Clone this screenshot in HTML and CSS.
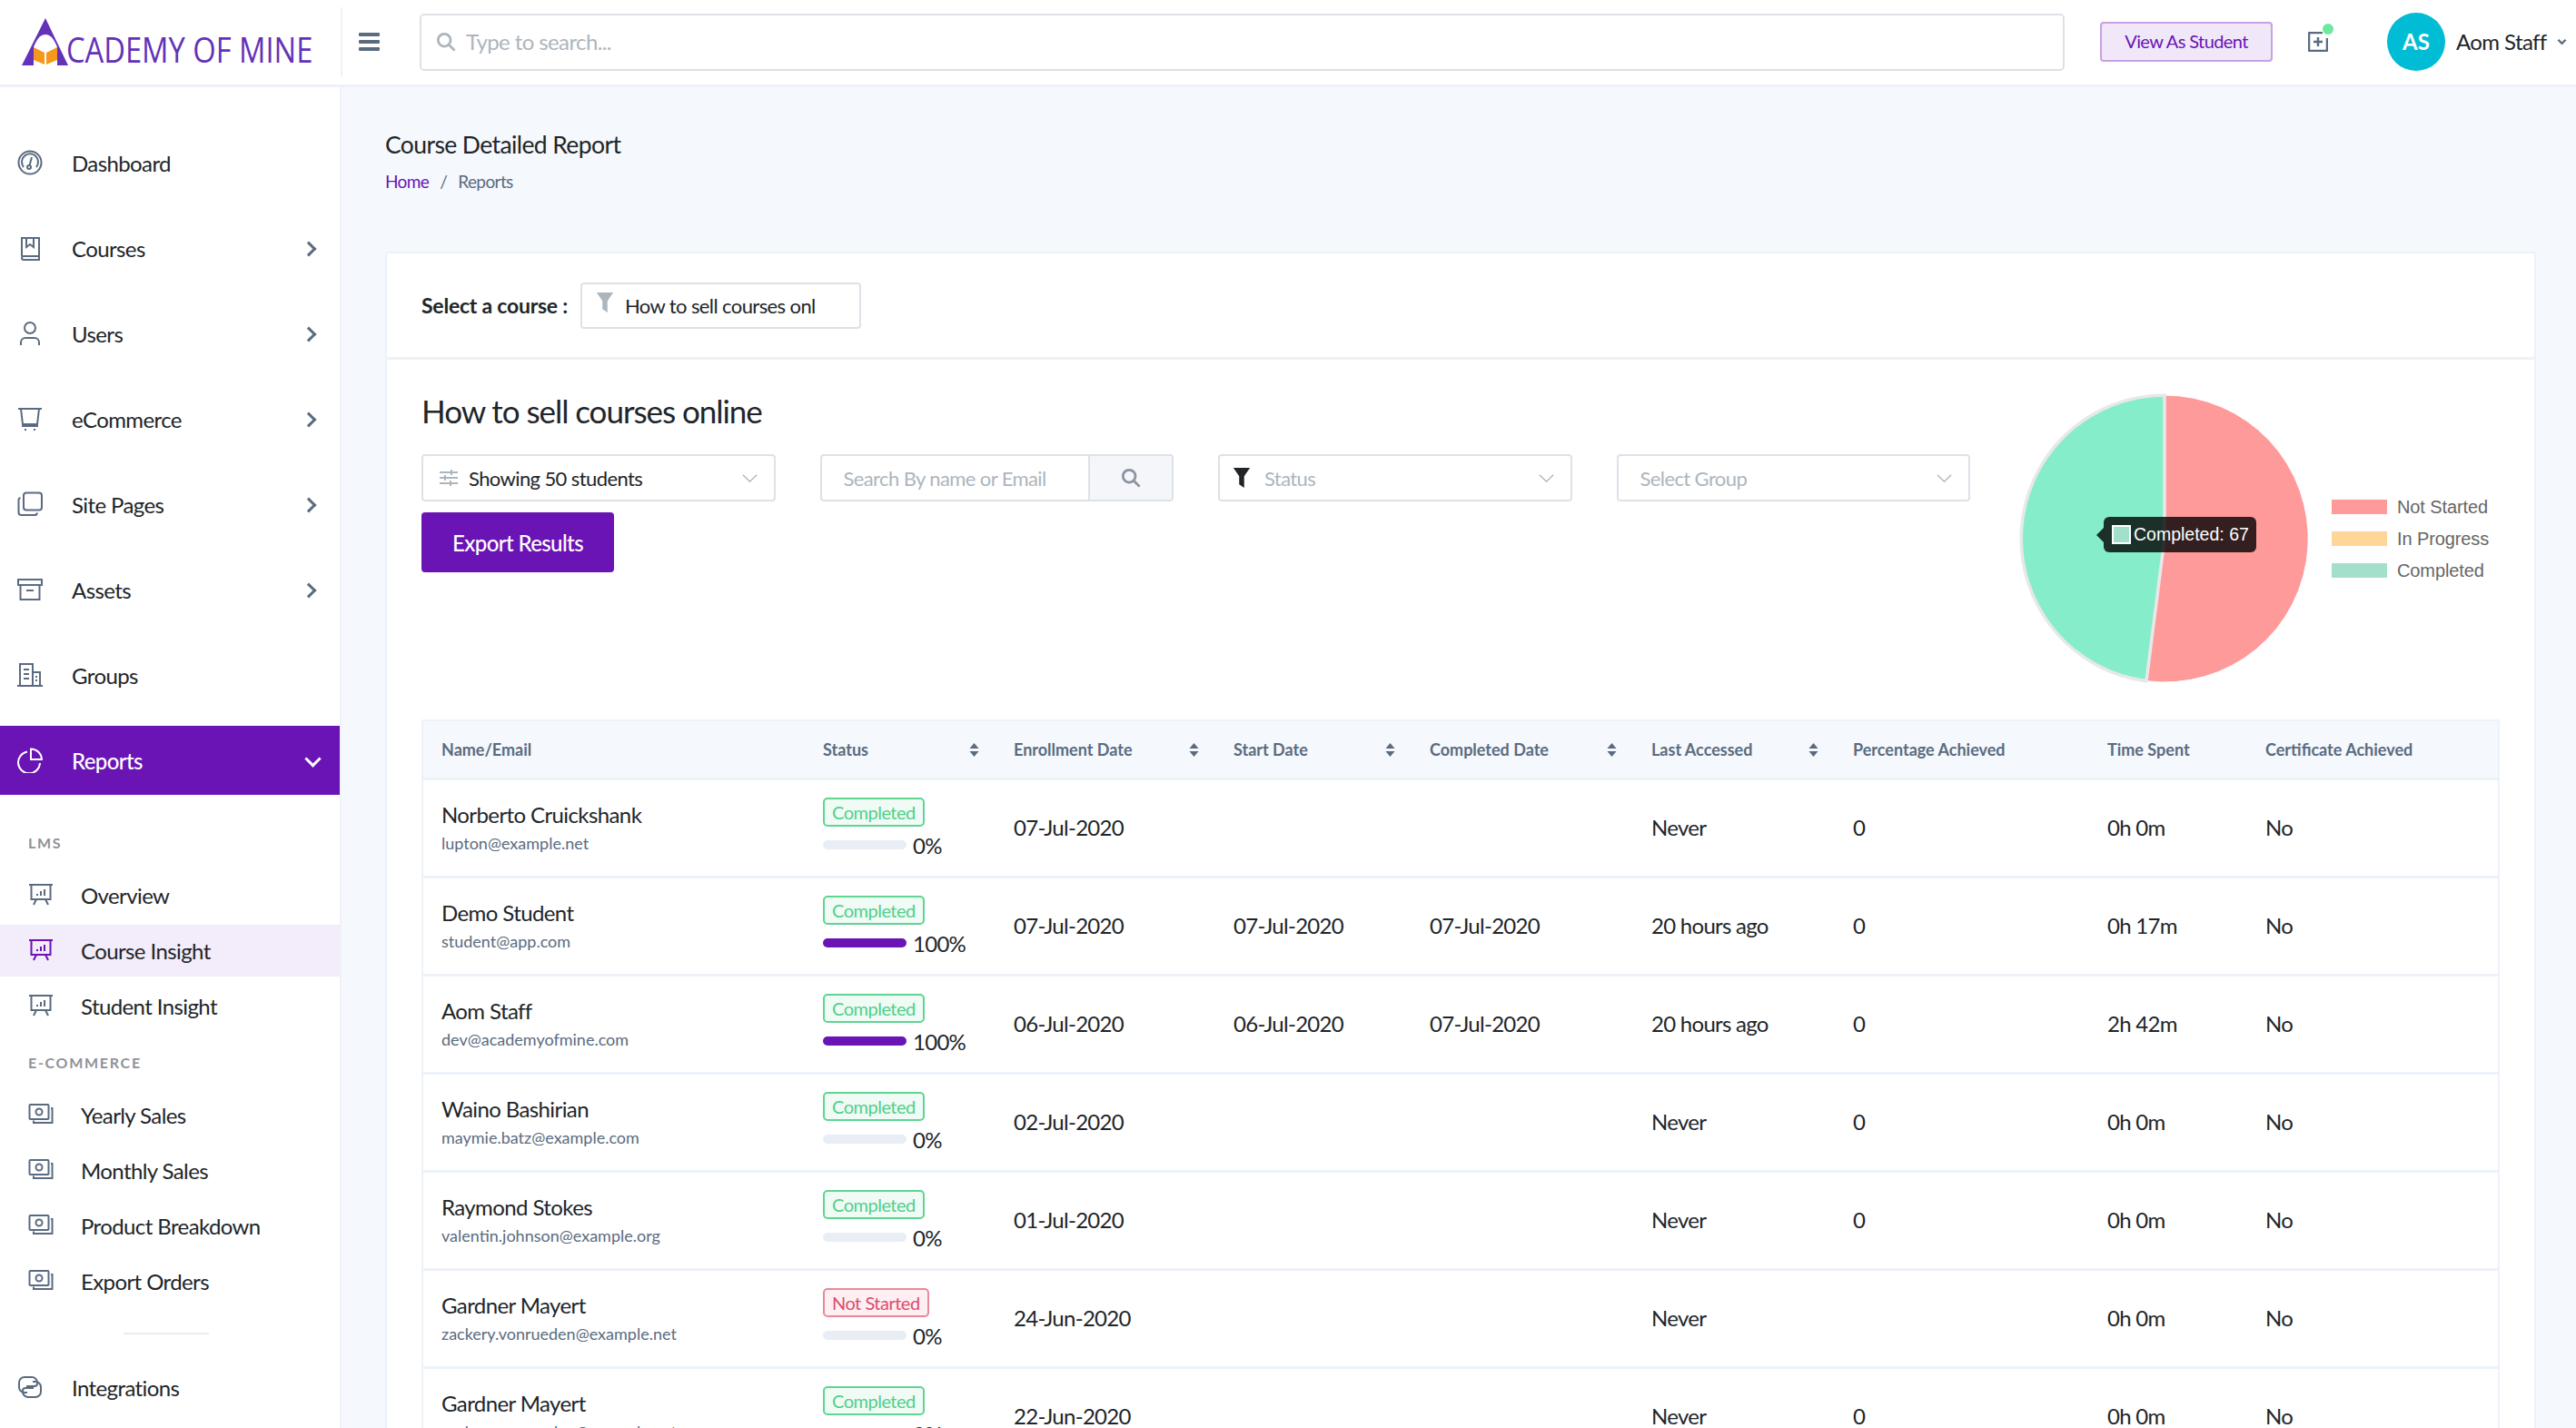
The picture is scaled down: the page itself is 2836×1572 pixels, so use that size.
FILE: index.html
```html
<!DOCTYPE html>
<html lang="en">
<head>
  <meta charset="UTF-8">
  <title>Course Detailed Report</title>
  <link rel="stylesheet" href="styles.css">
</head>
<body>
  <svg class="sprite" width="0" height="0">
    <symbol id="i-gauge" viewBox="0 0 28 28"><ellipse cx="14" cy="14" rx="12.5" ry="12.5"/><path d="M7 19a9 9 0 1 1 14 0"/><circle cx="13" cy="19" r="2"/><path d="M13.5 17 16 8"/></symbol>
    <symbol id="i-book" viewBox="0 0 28 28"><path d="M5 23V3h19v24H7a2 2 0 0 1-2-2 2 2 0 0 1 2-2h17"/><path d="M10 3v10l4-3 4 3V3"/></symbol>
    <symbol id="i-user" viewBox="0 0 28 28"><circle cx="14" cy="8" r="6"/><path d="M4 27v-3a5 5 0 0 1 5-5h10a5 5 0 0 1 5 5v3"/></symbol>
    <symbol id="i-cart" viewBox="0 0 28 28"><path d="M1 3h26M4 3l2 17h16l2-17M5 22h18"/><path d="M8 26h2M18 26h2"/></symbol>
    <symbol id="i-copy" viewBox="0 0 28 28"><rect x="7" y="1.5" width="20" height="19" rx="3"/><path d="M3.5 7A2.5 2.5 0 0 0 1.500 9.500V23a3 3 0 0 0 3 3H19a3 3 0 0 0 3-2.500"/></symbol>
    <symbol id="i-box" viewBox="0 0 28 28"><path d="M1 3h26v6H1zM3.500 9v16h21V9M10 15h8"/></symbol>
    <symbol id="i-building" viewBox="0 0 28 28"><path d="M0 26h28M3 26V2h14v24M17 11h8v15M7 8h6M7 13h6M7 18h6M20 16h2M20 20h2"/></symbol>
    <symbol id="i-pie" viewBox="0 0 28 28"><path d="M11 4.500A12 12 0 1 0 25 17"/><path d="M15 1.500A12 12 0 0 1 27 13H15z"/></symbol>
    <symbol id="i-board" viewBox="0 0 28 28"><path d="M1 2h26M3.500 2v16h21V2M9 18l-3 6M19 18l3 6"/><path d="M10 12v2M14 9v5M18 7v7"/></symbol>
    <symbol id="i-money" viewBox="0 0 28 28"><rect x="1.500" y="2" width="21" height="16" rx="1"/><circle cx="12" cy="10" r="3.500"/><path d="M25 6h1.500v16H6v-2.500"/></symbol>
    <symbol id="i-link" viewBox="0 0 28 28"><path d="M11 20H8a6 6 0 0 1-6-6V9a6 6 0 0 1 6-6h8a6 6 0 0 1 6 6v1a3 3 0 0 1-3 3h-9"/><path d="M17 8h3a6 6 0 0 1 6 6v5a6 6 0 0 1-6 6h-8a6 6 0 0 1-6-6v-1a3 3 0 0 1 3-3h9"/></symbol>
    <symbol id="i-sort" viewBox="0 0 12 16" preserveAspectRatio="none"><path d="M6 0l5.500 6.500H.5zM6 16 .5 9.500h11z"/></symbol>
    <symbol id="i-search" viewBox="0 0 24 24"><circle cx="10" cy="10" r="7.500"/><path d="M16 16l6.500 6.500"/></symbol>
    <symbol id="i-down" viewBox="0 0 20 12" preserveAspectRatio="none"><path d="M1 1l9 10 9-10"/></symbol>
  </svg>

  <header class="topbar">
    <a class="logo">
      <svg class="logo-mark" viewBox="0 0 51 52">
        <path class="logo-a" d="M26 0 51 52H0z"/>
        <path class="logo-gap" d="M26 18c-6 0-10 6-13 14v20h26V32c-3-8-7-14-13-14z"/>
        <path class="logo-book" d="M13 32l12 6v13l-12-5zM39 32l-12 6v13l12-5z"/>
      </svg>
      <span class="logo-text">CADEMY OF MINE</span>
    </a>
    <div class="topbar-main">
      <button class="burger"><span></span><span></span><span></span></button>
      <div class="top-search">
        <svg class="ico-search"><use href="#i-search"/></svg>
        <span>Type to search...</span>
      </div>
      <button class="btn-student">View As Student</button>
      <div class="notify">
        <svg viewBox="0 0 22 22"><path d="M16 1H2a1 1 0 0 0-1 1v18a1 1 0 0 0 1 1h18a1 1 0 0 0 1-1V7M11 6v10M6 11h10"/></svg>
        <i></i>
      </div>
      <div class="avatar">AS</div>
      <span class="user-name">Aom Staff</span>
      <svg class="user-caret" viewBox="0 0 12 8"><path d="M1.500 1.500 6 6l4.500-4.500"/></svg>
    </div>
  </header>

  <div class="layout">
    <aside class="sidebar">
      <a class="nav-item"><svg class="nav-ico"><use href="#i-gauge"/></svg>Dashboard</a>
      <a class="nav-item has-sub"><svg class="nav-ico"><use href="#i-book"/></svg>Courses</a>
      <a class="nav-item has-sub"><svg class="nav-ico"><use href="#i-user"/></svg>Users</a>
      <a class="nav-item has-sub"><svg class="nav-ico"><use href="#i-cart"/></svg>eCommerce</a>
      <a class="nav-item has-sub"><svg class="nav-ico"><use href="#i-copy"/></svg>Site Pages</a>
      <a class="nav-item has-sub"><svg class="nav-ico"><use href="#i-box"/></svg>Assets</a>
      <a class="nav-item"><svg class="nav-ico"><use href="#i-building"/></svg>Groups</a>
      <a class="nav-item active"><svg class="nav-ico"><use href="#i-pie"/></svg>Reports</a>

      <div class="nav-label first">LMS</div>
      <a class="sub-item"><svg class="nav-ico"><use href="#i-board"/></svg>Overview</a>
      <a class="sub-item current"><svg class="nav-ico"><use href="#i-board"/></svg>Course Insight</a>
      <a class="sub-item"><svg class="nav-ico"><use href="#i-board"/></svg>Student Insight</a>

      <div class="nav-label">E-COMMERCE</div>
      <a class="sub-item"><svg class="nav-ico"><use href="#i-money"/></svg>Yearly Sales</a>
      <a class="sub-item"><svg class="nav-ico"><use href="#i-money"/></svg>Monthly Sales</a>
      <a class="sub-item"><svg class="nav-ico"><use href="#i-money"/></svg>Product Breakdown</a>
      <a class="sub-item"><svg class="nav-ico"><use href="#i-money"/></svg>Export Orders</a>

      <div class="nav-divider"></div>
      <a class="nav-item"><svg class="nav-ico"><use href="#i-link"/></svg>Integrations</a>
    </aside>

    <main class="content">
      <h1 class="page-title">Course Detailed Report</h1>
      <div class="crumbs"><a>Home</a><span class="sep">/</span><span>Reports</span></div>

      <section class="card">
        <div class="course-select">
          <label>Select a course :</label>
          <div class="course-box">
            <svg viewBox="0 0 20 24"><path d="M0 0h20l-7 10v14l-6-4V10z"/></svg>
            <span>How to sell courses onl</span>
          </div>
        </div>

        <div class="card-body">
          <div class="report-top">
            <div class="report-left">
              <h2>How to sell courses online</h2>
              <div class="filters">
                <div class="filter">
                  <svg class="ico-lines" viewBox="0 0 20 18"><path d="M0 3h20M0 9h20M0 15h20"/><path d="M13 0v6M6 6v6M12 12v6"/></svg>
                  <span class="val">Showing 50 students</span>
                  <svg class="caret"><use href="#i-down"/></svg>
                </div>
                <div class="filter search-filter">
                  <span class="ph">Search By name or Email</span>
                  <b><svg class="ico-search"><use href="#i-search"/></svg></b>
                </div>
                <div class="filter">
                  <svg class="ico-funnel" viewBox="0 0 20 24"><path d="M0 0h20l-7 10v14l-6-4V10z"/></svg>
                  <span class="ph status-ph">Status</span>
                  <svg class="caret"><use href="#i-down"/></svg>
                </div>
                <div class="filter plain">
                  <span class="ph">Select Group</span>
                  <svg class="caret"><use href="#i-down"/></svg>
                </div>
              </div>
              <button class="btn-export">Export Results</button>
            </div>

            <div class="chart">
              <div class="pie">
                <svg viewBox="0 0 320 320">
                  <path class="slice-red" d="M160 160V2A158 158 0 1 1 140 316.700Z"/>
                  <path class="slice-green" d="M160 160 140 316.700A158 158 0 0 1 160 2Z"/>
                </svg>
                <div class="tooltip"><i></i>Completed: 67</div>
              </div>
              <ul class="legend">
                <li><i class="red"></i>Not Started</li>
                <li><i class="orange"></i>In Progress</li>
                <li><i class="green"></i>Completed</li>
              </ul>
            </div>
          </div>

          <table class="report">
            <thead>
              <tr>
                <th>Name/Email</th>
                <th class="sort">Status<svg><use href="#i-sort"/></svg></th>
                <th class="sort">Enrollment Date<svg><use href="#i-sort"/></svg></th>
                <th class="sort">Start Date<svg><use href="#i-sort"/></svg></th>
                <th class="sort">Completed Date<svg><use href="#i-sort"/></svg></th>
                <th class="sort">Last Accessed<svg><use href="#i-sort"/></svg></th>
                <th>Percentage Achieved</th>
                <th>Time Spent</th>
                <th>Certificate Achieved</th>
              </tr>
            </thead>
            <tbody>
              <tr>
                <td><div class="name">Norberto Cruickshank</div><div class="email">lupton@example.net</div></td>
                <td><span class="badge ok">Completed</span><div class="prog"><span class="bar"></span>0%</div></td>
                <td>07-Jul-2020</td><td></td><td></td><td>Never</td><td>0</td><td>0h 0m</td><td>No</td>
              </tr>
              <tr>
                <td><div class="name">Demo Student</div><div class="email">student@app.com</div></td>
                <td><span class="badge ok">Completed</span><div class="prog"><span class="bar full"></span>100%</div></td>
                <td>07-Jul-2020</td><td>07-Jul-2020</td><td>07-Jul-2020</td><td>20 hours ago</td><td>0</td><td>0h 17m</td><td>No</td>
              </tr>
              <tr>
                <td><div class="name">Aom Staff</div><div class="email">dev@academyofmine.com</div></td>
                <td><span class="badge ok">Completed</span><div class="prog"><span class="bar full"></span>100%</div></td>
                <td>06-Jul-2020</td><td>06-Jul-2020</td><td>07-Jul-2020</td><td>20 hours ago</td><td>0</td><td>2h 42m</td><td>No</td>
              </tr>
              <tr>
                <td><div class="name">Waino Bashirian</div><div class="email">maymie.batz@example.com</div></td>
                <td><span class="badge ok">Completed</span><div class="prog"><span class="bar"></span>0%</div></td>
                <td>02-Jul-2020</td><td></td><td></td><td>Never</td><td>0</td><td>0h 0m</td><td>No</td>
              </tr>
              <tr>
                <td><div class="name">Raymond Stokes</div><div class="email">valentin.johnson@example.org</div></td>
                <td><span class="badge ok">Completed</span><div class="prog"><span class="bar"></span>0%</div></td>
                <td>01-Jul-2020</td><td></td><td></td><td>Never</td><td>0</td><td>0h 0m</td><td>No</td>
              </tr>
              <tr>
                <td><div class="name">Gardner Mayert</div><div class="email">zackery.vonrueden@example.net</div></td>
                <td><span class="badge bad">Not Started</span><div class="prog"><span class="bar"></span>0%</div></td>
                <td>24-Jun-2020</td><td></td><td></td><td>Never</td><td></td><td>0h 0m</td><td>No</td>
              </tr>
              <tr>
                <td><div class="name">Gardner Mayert</div><div class="email">zackery.vonrueden@example.net</div></td>
                <td><span class="badge ok">Completed</span><div class="prog"><span class="bar"></span>0%</div></td>
                <td>22-Jun-2020</td><td></td><td></td><td>Never</td><td>0</td><td>0h 0m</td><td>No</td>
              </tr>
            </tbody>
          </table>
        </div>
      </section>
    </main>
  </div>
</body>
</html>
```

FILE: styles.css
```css
* { box-sizing: border-box; }
html, body { margin: 0; height: 100%; overflow: hidden; }
body { font-family: Lato, "Open Sans", sans-serif; font-size: 24px; letter-spacing: -.025em; color: #212529; background: #f5f8fc; }
.sprite { position: absolute; }
button { font-family: inherit; letter-spacing: inherit; cursor: pointer; }

/* top bar */
.topbar { display: flex; height: 96px; background: #fff; border-bottom: 3px solid #edf2f9; }
.logo { width: 375px; flex: none; position: relative; display: flex; }
.logo-mark { position: absolute; left: 24px; top: 20px; width: 51px; height: 52px; }
.logo-a { fill: #6332b8; }
.logo-gap { fill: #fff; }
.logo-book { fill: #f7981d; }
.logo-text { position: absolute; left: 73px; top: 31px; font-family: "Open Sans", sans-serif; font-size: 38px; line-height: 46px; letter-spacing: 0; color: #6332b8; white-space: nowrap; transform: scaleX(.86); transform-origin: left center; }
.topbar-main { flex: 1; min-width: 0; display: flex; align-items: center; border-left: 2px solid #edf2f9; margin: 8px 0 9px; }
.burger { flex: none; width: 23px; height: 20px; margin-left: 18px; padding: 0; border: 0; background: none; display: flex; flex-direction: column; justify-content: space-between; }
.burger span { height: 4px; background: #5a6b80; border-radius: 1px; }
.top-search { flex: none; width: 1811px; height: 63px; margin-left: 44px; padding-left: 16px; display: flex; align-items: center; gap: 11px; border: 2px solid #dde2e8; border-radius: 5px; color: #adb5bd; font-size: 24px; }
.top-search span { margin-top: -2px; }
.ico-search { width: 22px; height: 22px; fill: none; stroke: #adb5bd; stroke-width: 3; }
.btn-student { flex: none; width: 190px; height: 44px; margin-left: 39px; padding: 0 0 2px; background: #f0e8f8; border: 2px solid #c9a0e3; border-radius: 4px; color: #6a14b5; font-size: 20px; }
.notify { flex: none; position: relative; width: 22px; height: 22px; margin-left: 39px; }
.notify svg { display: block; width: 22px; height: 22px; fill: none; stroke: #5a6b80; stroke-width: 2.500; }
.notify i { position: absolute; right: -6px; top: -9px; width: 12px; height: 12px; border-radius: 50%; background: #6ee7a0; }
.avatar { flex: none; width: 64px; height: 64px; margin-left: 65px; border-radius: 50%; background: #00bcd4; color: #fff; font-size: 24px; font-weight: 700; letter-spacing: 0; display: flex; align-items: center; justify-content: center; padding-bottom: 2px; }
.user-name { flex: none; margin: -2px 0 0 12px; font-size: 24px; white-space: nowrap; }
.user-caret { flex: none; width: 11px; height: 8px; margin-left: 11px; fill: none; stroke: #5a6b80; stroke-width: 2.500; }

/* sidebar */
.layout { display: flex; height: calc(100% - 96px); }
.sidebar { width: 376px; flex: none; padding-top: 45px; background: #fff; border-right: 2px solid #edf2f9; overflow: hidden; }
.nav-item { position: relative; display: flex; align-items: center; height: 76px; margin-bottom: 18px; padding-left: 19px; }
.nav-ico { width: 28px; height: 28px; margin-right: 32px; fill: none; stroke: #5a6b80; stroke-width: 2; flex: none; }
.has-sub::after { content: ""; position: absolute; left: 334px; top: 33px; width: 9px; height: 9px; border-top: 3px solid #5a6b80; border-right: 3px solid #5a6b80; transform: rotate(45deg); }
.active { background: #6a14b5; color: #fff; font-weight: 500; margin-bottom: 0; }
.active .nav-ico { stroke: #fff; }
.active::after { content: ""; position: absolute; left: 338px; top: 30px; width: 10px; height: 10px; border-bottom: 3px solid #fff; border-right: 3px solid #fff; transform: rotate(45deg); }
.nav-label { margin: 24px 0 19px 31px; font-size: 16px; line-height: 20px; font-weight: 700; letter-spacing: 1.700px; color: #8f9299; }
.nav-label.first { margin-top: 43px; }
.sub-item { display: flex; align-items: center; height: 57px; margin-bottom: 4px; padding-left: 31px; }
.sub-item .nav-ico { margin-right: 30px; }
.current { background: #f3ecfa; }
.current .nav-ico { stroke: #6a14b5; }
.nav-divider { width: 94px; height: 2px; margin: 28px 0 20px 136px; background: #e9ecef; }

/* content */
.content { flex: 1; min-width: 0; padding: 46px 44px 0 48px; }
.page-title { margin: 0; font-size: 26.500px; line-height: 34px; font-weight: 400; }
.crumbs { margin-top: 12px; font-size: 19px; line-height: 24px; color: #5a6b80; }
.crumbs a { color: #6a14b5; }
.crumbs .sep { margin: 0 12px; }
.card { margin-top: 65px; background: #fff; border: 2px solid #edf2f9; border-bottom: 0; border-radius: 4px 4px 0 0; }
.course-select { display: flex; align-items: center; height: 117px; padding-left: 38px; border-bottom: 3px solid #edf2f9; }
.course-select label { font-weight: 700; font-size: 23px; letter-spacing: -.01em; }
.course-box { width: 309px; height: 51px; margin-left: 14px; padding-left: 15px; display: flex; align-items: center; gap: 12px; border: 2px solid #dde2e8; border-radius: 4px; font-size: 22px; overflow: hidden; white-space: nowrap; }
.course-box svg { width: 20px; height: 22px; fill: #adb5bd; flex: none; margin-top: -6px; }
.card-body { padding: 37px 38px 0; }
.report-top { display: flex; height: 359px; }
.report-left { width: 1705px; flex: none; }
.report-left h2 { margin: 0 0 29px; font-size: 35px; line-height: 38px; font-weight: 400; letter-spacing: -.03em; }
.filters { display: grid; grid-template-columns: repeat(4, 1fr); gap: 49px; }
.filter { height: 52px; padding: 0 18px 0 14px; display: flex; align-items: center; gap: 13px; border: 2px solid #dde2e8; border-radius: 4px; font-size: 22px; }
.filter .val { flex: 1; }
.filter .ph { flex: 1; color: #adb5bd; }
.filter .status-ph { margin-left: 2px; }
.filter.plain { padding-left: 24px; }
.ico-lines { width: 20px; height: 18px; margin: 0 -1px 0 4px; fill: none; stroke: #adb5bd; stroke-width: 2; }
.ico-funnel { width: 20px; height: 22px; fill: #212529; }
.caret { width: 17px; height: 9px; fill: none; stroke: #adb5bd; stroke-width: 1.500; }
.search-filter { padding: 0 0 0 24px; }
.search-filter b { width: 92px; height: 100%; display: flex; align-items: center; justify-content: center; background: #f5f6fa; border-left: 2px solid #dde2e8; }
.search-filter .ico-search { stroke: #8a93a0; }
.btn-export { display: block; width: 212px; height: 66px; margin-top: 12px; padding: 0; background: #6a14b5; border: 0; border-radius: 4px; color: #fff; font-size: 24px; font-weight: 500; }

/* chart */
.chart { display: flex; align-items: center; width: 527px; height: 320px; margin-left: 54px; flex: none; letter-spacing: 0; }
.pie { position: relative; width: 320px; height: 320px; flex: none; }
.pie svg { display: block; width: 320px; height: 320px; }
.slice-red { fill: #ff9a9a; stroke: #fff; stroke-width: 1; }
.slice-green { fill: #86edca; stroke: #e8e8e8; stroke-width: 3.500; }
.tooltip { position: absolute; left: 93px; top: 136px; width: 168px; height: 39px; padding-left: 9px; display: flex; align-items: center; gap: 3px; background: rgba(0, 0, 0, .8); border-radius: 6px; color: #fff; font-family: "Liberation Sans", sans-serif; font-size: 19.500px; }
.tooltip::before { content: ""; position: absolute; left: -8px; top: 12px; border: 8px solid transparent; border-left: 0; border-right-color: rgba(0, 0, 0, .8); }
.tooltip i { width: 21px; height: 21px; background: #a3e0cc; border: 2px solid #fff; }
.legend { list-style: none; margin: 0 0 0 24px; padding: 0; font-family: "Liberation Sans", sans-serif; font-size: 20px; letter-spacing: -.1px; color: #666; }
.legend li { display: flex; align-items: center; gap: 11px; height: 35px; white-space: nowrap; }
.legend i { width: 61px; height: 16px; }
.legend .red { background: #ff9a9a; }
.legend .orange { background: #ffd699; }
.legend .green { background: #a3e0cc; }

/* table */
.report { width: 100%; table-layout: fixed; border-collapse: collapse; border-left: 2px solid #edf2f9; border-right: 2px solid #edf2f9; }
.report th { height: 64px; padding: 0 0 0 22px; background: #f5f8fc; border-top: 2px solid #edf2f9; border-bottom: 3px solid #edf2f9; color: #5a6b80; font-size: 18px; font-weight: 700; letter-spacing: 0; text-align: left; white-space: nowrap; }
.report th:nth-child(1) { width: 419px; padding-left: 20px; }
.report th:nth-child(2) { width: 210px; }
.report th:nth-child(3) { width: 242px; }
.report th:nth-child(4) { width: 216px; }
.report th:nth-child(5) { width: 244px; }
.report th:nth-child(6) { width: 222px; }
.report th:nth-child(7) { width: 280px; }
.report th:nth-child(8) { width: 174px; }
.sort { position: relative; }
.sort svg { position: absolute; right: 16px; top: 24px; width: 11px; height: 15px; fill: #5a6b80; }
.report td { height: 108px; padding: 0 0 1px 22px; border-bottom: 3px solid #edf2f9; font-size: 24px; letter-spacing: -.03em; background: #fff; }
.report td:first-child { padding-left: 20px; }
.name { font-size: 24px; line-height: 32px; letter-spacing: -.025em; }
.email { margin-top: 2px; font-size: 18px; line-height: 26px; letter-spacing: 0; color: #5a6b80; }
.badge { display: block; width: fit-content; height: 32px; padding: 0 8px; border-radius: 5px; font-size: 20px; line-height: 28px; letter-spacing: -.025em; }
.ok { color: #4fd08a; background: #f0fbf5; border: 2px solid #5fd592; }
.bad { color: #dc4c6a; background: #fdeff2; border: 2px solid #e88a9c; }
.prog { display: flex; align-items: center; gap: 7px; height: 26px; margin-top: 7px; font-size: 24px; }
.bar { width: 92px; height: 10px; background: #e9edf4; border-radius: 5px; }
.bar.full { background: #6a14b5; }
```
